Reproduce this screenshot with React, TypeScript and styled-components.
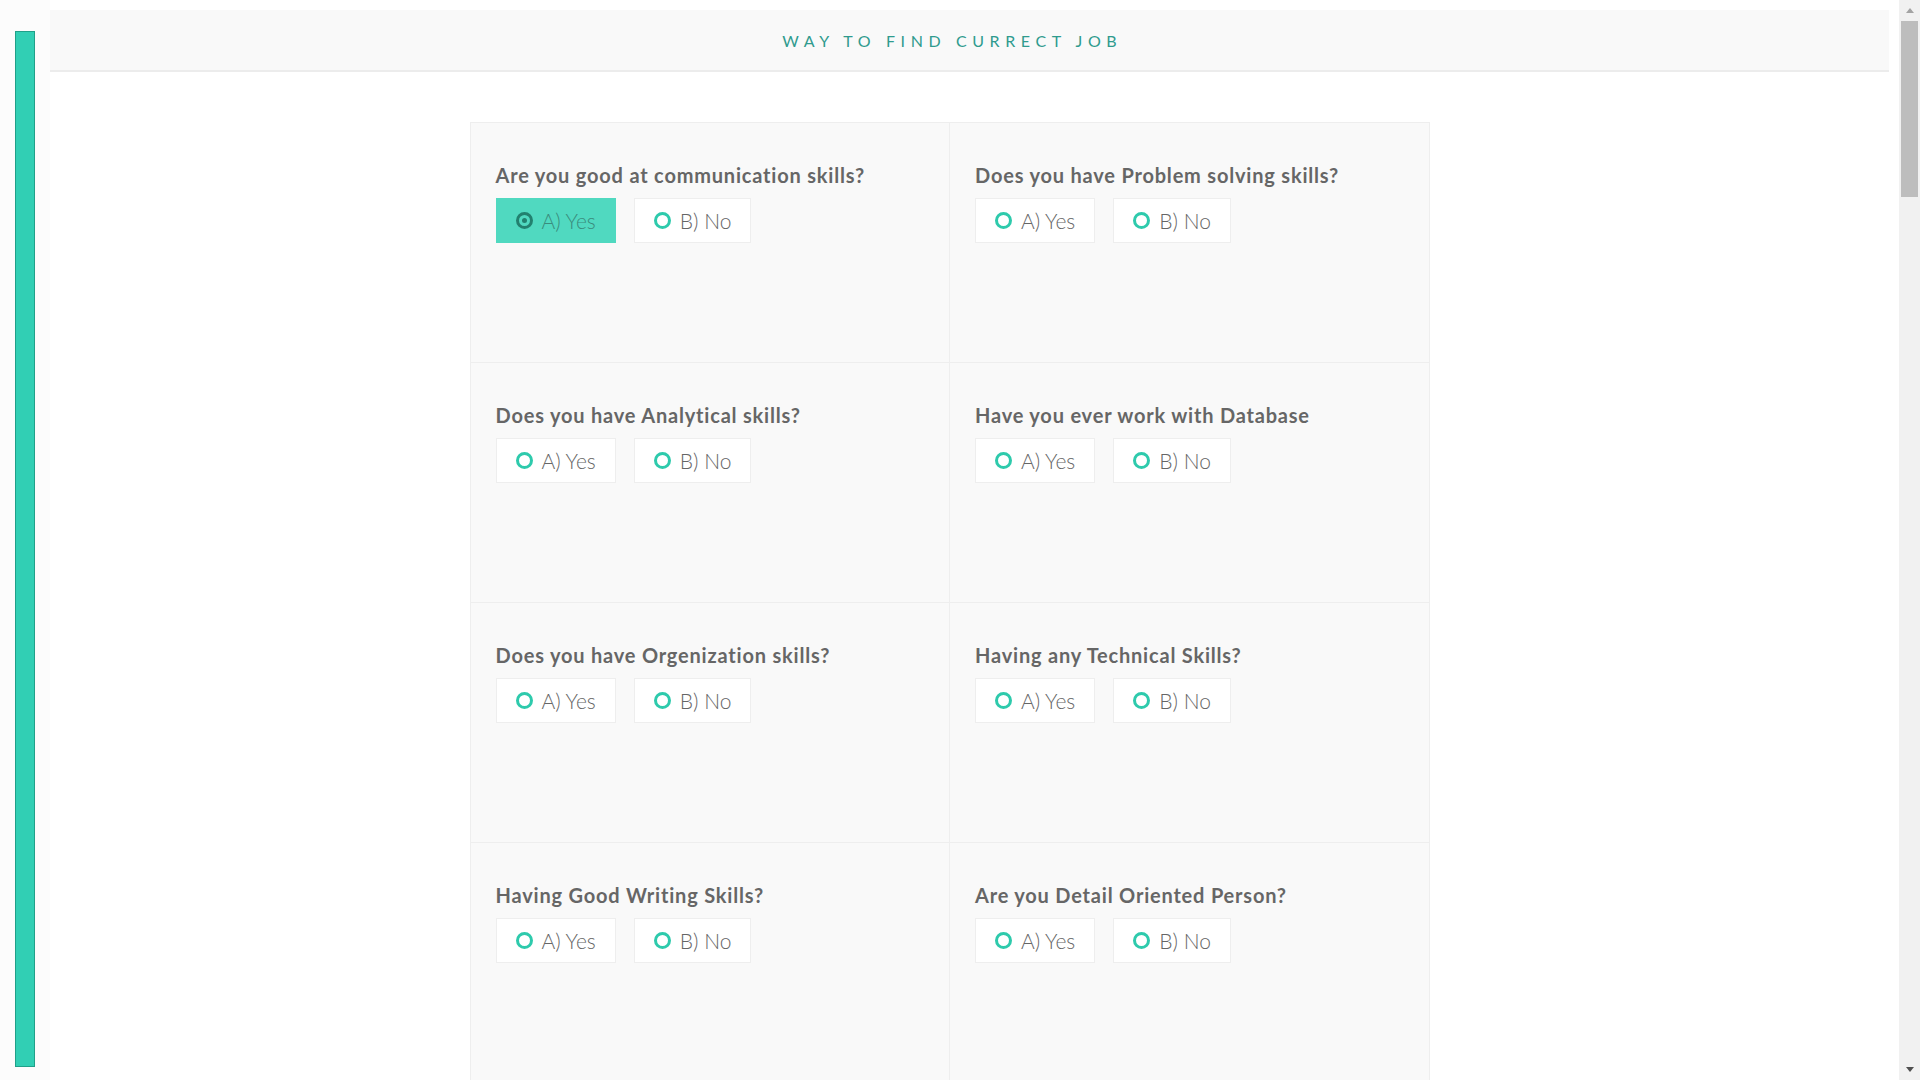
import React from "react";
import styled, { createGlobalStyle } from "styled-components";

const GlobalStyle = createGlobalStyle`
  html, body {
    margin: 0;
    padding: 0;
    background: #ffffff;
    font-family: Lato, "Open Sans", "Noto Sans", sans-serif;
  }
  ::-webkit-scrollbar {
    width: 0;
    height: 0;
  }
`;

const Page = styled.div`
  padding: 10px 31px 40px 10px;
  box-sizing: border-box;
`;

const SideRail = styled.aside`
  position: fixed;
  left: 0;
  top: 0;
  width: 50px;
  height: 100vh;
  box-sizing: border-box;
  padding: 31px 15px 13px;
  background: #fcfcfc;
  display: flex;
  flex-direction: column;
  z-index: 5;
`;

const ProgressBar = styled.div`
  flex: 1;
  background: #31cfb4;
  border: 1px solid #20a089;
`;

const ScrollTrack = styled.div`
  position: fixed;
  right: 0;
  top: 0;
  width: 21px;
  height: 100vh;
  background: #f1f1f1;
  display: flex;
  flex-direction: column;
  z-index: 6;
`;

const ScrollArrow = styled.div<{ $dir: "up" | "down" }>`
  height: 21px;
  flex-shrink: 0;
  display: flex;
  align-items: center;
  justify-content: center;
  &::before {
    content: "";
    width: 0;
    height: 0;
    border-left: 4.5px solid transparent;
    border-right: 4.5px solid transparent;
    ${(p) =>
      p.$dir === "up"
        ? "border-bottom: 5px solid #a3a3a3;"
        : "border-top: 5px solid #505050;"}
  }
`;

const ScrollLane = styled.div`
  flex: 1;
  padding: 0 2px;
`;

const ScrollThumb = styled.div`
  height: 176px;
  background: #bdbdbd;
`;

const Header = styled.header`
  height: 60px;
  background: #f9f9f9;
  border-bottom: 2px solid #ececec;
  display: flex;
  align-items: center;
  justify-content: center;
`;

const Title = styled.h1`
  margin: 0;
  font-family: Lato, "Open Sans", sans-serif;
  font-weight: 400;
  font-size: 16px;
  letter-spacing: 5.6px;
  padding-left: 5.6px;
  color: #2f9b8e;
  text-transform: uppercase;
`;

const Grid = styled.main`
  width: 960px;
  margin: 50px auto 0;
  display: grid;
  grid-template-columns: 1fr 1fr;
  grid-auto-rows: 240px;
  border-top: 1px solid #eeeeee;
  border-left: 1px solid #eeeeee;
  box-sizing: border-box;
`;

const Cell = styled.section`
  background: #f9f9f9;
  border-right: 1px solid #eeeeee;
  border-bottom: 1px solid #eeeeee;
  padding: 37px 25px 0;
  display: flex;
  flex-direction: column;
  align-items: flex-start;
  gap: 7px;
`;

const Question = styled.h2`
  margin: 0;
  font-family: Lato, "Open Sans", sans-serif;
  font-weight: 700;
  font-size: 20px;
  letter-spacing: 0.8px;
  line-height: 31px;
  color: #666666;
`;

const Options = styled.div`
  display: flex;
  gap: 18px;
`;

const Option = styled.label<{ $selected?: boolean }>`
  display: flex;
  align-items: center;
  gap: 9px;
  height: 45px;
  box-sizing: border-box;
  padding: 0 19px 0 19px;
  background: ${(p) => (p.$selected ? "#50d9c0" : "#ffffff")};
  border: 1px solid ${(p) => (p.$selected ? "#50d9c0" : "#eeeeee")};
  font-family: Lato, "Open Sans", sans-serif;
  font-weight: 300;
  font-size: 21px;
  color: ${(p) => (p.$selected ? "#3a8c7d" : "#666666")};
  cursor: pointer;
`;

const Radio = styled.span<{ $selected?: boolean }>`
  position: relative;
  width: 17px;
  height: 17px;
  box-sizing: border-box;
  border-radius: 50%;
  border: 3px solid ${(p) => (p.$selected ? "#22816f" : "#2ecaac")};
  flex-shrink: 0;
  &::after {
    content: "";
    display: ${(p) => (p.$selected ? "block" : "none")};
    position: absolute;
    left: 50%;
    top: 50%;
    width: 5px;
    height: 5px;
    margin: -2.5px 0 0 -2.5px;
    border-radius: 50%;
    background: #22816f;
  }
`;

const questions = [
  "Are you good at communication skills?",
  "Does you have Problem solving skills?",
  "Does you have Analytical skills?",
  "Have you ever work with Database",
  "Does you have Orgenization skills?",
  "Having any Technical Skills?",
  "Having Good Writing Skills?",
  "Are you Detail Oriented Person?",
];

export default function App() {
  return (
    <>
      <GlobalStyle />
      <SideRail>
        <ProgressBar />
      </SideRail>
      <ScrollTrack>
        <ScrollArrow $dir="up" />
        <ScrollLane>
          <ScrollThumb />
        </ScrollLane>
        <ScrollArrow $dir="down" />
      </ScrollTrack>
      <Page>
        <Header>
          <Title>Way to find currect job</Title>
        </Header>
        <Grid>
          {questions.map((q, i) => (
            <Cell key={q}>
              <Question>{q}</Question>
              <Options>
                <Option $selected={i === 0}>
                  <Radio $selected={i === 0} />
                  A) Yes
                </Option>
                <Option>
                  <Radio />
                  B) No
                </Option>
              </Options>
            </Cell>
          ))}
        </Grid>
      </Page>
    </>
  );
}
